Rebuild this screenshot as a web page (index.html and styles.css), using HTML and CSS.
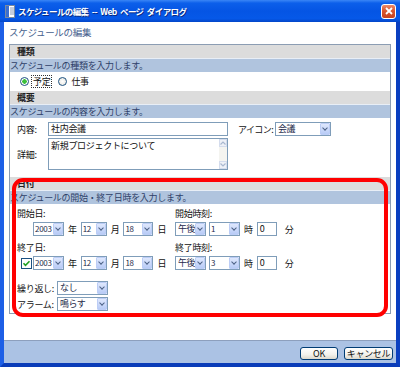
FILE: index.html
```html
<!DOCTYPE html>
<html lang="ja">
<head>
    <meta charset="UTF-8">
    <title>スケジュールの編集</title>
    <link rel="stylesheet" href="styles.css">
</head>
<body>
    <div class="window">
        <div class="titlebar">
            <svg class="appicon" width="10" height="13" viewBox="0 0 10 13">
                <rect x="0.5" y="0.5" width="9" height="12" fill="#fff" stroke="#7a8aa0"/>
                <rect x="1" y="1" width="3" height="11" fill="#3b6fd0"/>
                <path d="M5 3h4M5 5h4M5 7h4M5 9h4" stroke="#8a9ab8" stroke-width="1"/>
            </svg>
            <span class="title">スケジュールの編集 -- Web ページ ダイアログ</span>
            <span class="close">
                <svg width="8" height="8" viewBox="0 0 8 8"><path d="M1 1L7 7M7 1L1 7" stroke="#fff" stroke-width="1.8"/></svg>
            </span>
        </div>
        <div class="frame">
            <div class="client">
                <div class="heading">スケジュールの編集</div>
                <div class="box">
                    <div class="sec-head">種類</div>
                    <div class="sec-desc">スケジュールの種類を入力します。</div>
                    <div class="radios">
                        <span class="radio on"></span><span class="rlabel focus">予定</span>
                        <span class="radio"></span><span class="rlabel">仕事</span>
                    </div>

                    <div class="sec-head">概要</div>
                    <div class="sec-desc">スケジュールの内容を入力します。</div>
                    <div class="summary">
                        <div class="fields">
                            <div class="field">
                                <span class="flabel">内容:</span>
                                <span class="textbox wide">社内会議</span>
                            </div>
                            <div class="field">
                                <span class="flabel">詳細:</span>
                                <div class="textarea">
                                    <span class="tatext">新規プロジェクトについて</span>
                                    <div class="scroll">
                                        <span class="sbtn"><svg width="6" height="4" viewBox="0 0 6 4"><path d="M0.5 3.5L3 1L5.5 3.5" fill="none" stroke="#a9b8d0" stroke-width="1.2"/></svg></span>
                                        <span class="sbtn"><svg width="6" height="4" viewBox="0 0 6 4"><path d="M0.5 0.5L3 3L5.5 0.5" fill="none" stroke="#a9b8d0" stroke-width="1.2"/></svg></span>
                                    </div>
                                </div>
                            </div>
                        </div>
                        <div class="field iconfield">
                            <span class="ilabel">アイコン:</span>
                            <span class="sel w56"><b>会議</b><i class="arr"></i></span>
                        </div>
                    </div>

                    <div class="sec-date">
                        <div class="sec-head">日付</div>
                        <div class="sec-desc">スケジュールの開始・終了日時を入力します。</div>
                        <div class="dates">
                            <div class="drow labels">
                                <span class="dcol">開始日:</span>
                                <span>開始時刻:</span>
                            </div>
                            <div class="drow ctrls">
                                <span class="dcol indent">
                                    <span class="sel w31 num"><b>2003</b><i class="arr"></i></span><span class="unit">年</span>
                                    <span class="sel w26 num"><b>12</b><i class="arr"></i></span><span class="unit">月</span>
                                    <span class="sel w30 num"><b>18</b><i class="arr"></i></span><span class="unit">日</span>
                                </span>
                                <span class="tcol">
                                    <span class="sel w31"><b>午後</b><i class="arr"></i></span>
                                    <span class="sel w31 num gap"><b>1</b><i class="arr"></i></span><span class="unit">時</span>
                                    <span class="textbox w20">0</span><span class="unit min">分</span>
                                </span>
                            </div>
                            <div class="drow labels second">
                                <span class="dcol">終了日:</span>
                                <span>終了時刻:</span>
                            </div>
                            <div class="drow ctrls">
                                <span class="dcol checkrow">
                                    <svg class="check" width="11" height="11" viewBox="0 0 11 11">
                                        <rect x="0.5" y="0.5" width="10" height="10" fill="#fff" stroke="#1c5180"/>
                                        <path d="M2.5 5.2L4.5 7.3L8.5 3.2" fill="none" stroke="#21a121" stroke-width="1.6"/>
                                    </svg>
                                    <span class="sel w31 num"><b>2003</b><i class="arr"></i></span><span class="unit">年</span>
                                    <span class="sel w26 num"><b>12</b><i class="arr"></i></span><span class="unit">月</span>
                                    <span class="sel w30 num"><b>18</b><i class="arr"></i></span><span class="unit">日</span>
                                </span>
                                <span class="tcol">
                                    <span class="sel w31"><b>午後</b><i class="arr"></i></span>
                                    <span class="sel w31 num gap"><b>3</b><i class="arr"></i></span><span class="unit">時</span>
                                    <span class="textbox w20">0</span><span class="unit min">分</span>
                                </span>
                            </div>
                            <div class="drow extra">
                                <span class="xlabel">繰り返し:</span>
                                <span class="sel w51"><b>なし</b><i class="arr"></i></span>
                            </div>
                            <div class="drow extra next">
                                <span class="xlabel">アラーム:</span>
                                <span class="sel w51"><b>鳴らす</b><i class="arr"></i></span>
                            </div>
                        </div>
                    </div>
                </div>
            </div>
            <div class="footer">
                <span class="btn ok">OK</span>
                <span class="btn cancel">キャンセル</span>
            </div>
        </div>
    </div>
</body>
</html>
```

FILE: styles.css
```css
*{
    box-sizing: border-box;
}
body{
    margin: 0;
    font-family: "Noto Sans CJK JP", "Noto Sans", sans-serif;
    font-size: 9px;
    color: #111;
    letter-spacing: -0.3px;
}
.window{
    width: 400px;
    height: 367px;
    display: flex;
    flex-direction: column;
    background: #0a4fd6;
}
.titlebar{
    height: 22px;
    flex: none;
    display: flex;
    align-items: center;
    padding: 0 4px 0 5px;
    background: linear-gradient(#3a86f6 0%, #0c5fea 14%, #0555e4 50%, #0658e8 84%, #0346c8 100%);
}
.titlebar .title{
    margin-left: 3px;
    color: #fff;
    font-weight: bold;
    font-size: 8.5px;
    letter-spacing: -0.6px;
    word-spacing: 2px;
    white-space: pre;
    text-shadow: 1px 1px 0 #0a2a80;
}
.titlebar .close{
    margin-left: auto;
    width: 15px;
    height: 15px;
    border: 1px solid #fff;
    border-radius: 3px;
    background: linear-gradient(#ec8a6a, #d9562f 45%, #c7421f);
    display: flex;
    align-items: center;
    justify-content: center;
}
.frame{
    flex: 1;
    display: flex;
    flex-direction: column;
    background: #fff;
    border-left: 4px solid #1d5fe6;
    border-right: 4px solid #0a3fc0;
    border-bottom: 4px solid #0a3cb8;
}
.client{
    flex: 1;
    padding: 0 5px;
}
.heading{
    height: 22px;
    line-height: 20px;
    color: #46618e;
    font-size: 9.5px;
}
.box{
    border: 1px solid #8c9db3;
}
.sec-head{
    height: 13px;
    line-height: 13px;
    background: #dcdcdc;
    padding-left: 7px;
    font-weight: bold;
    color: #222;
}
.sec-desc{
    height: 14px;
    line-height: 13px;
    background: #b0c4de;
    border-top: 1px solid #e8eef6;
    color: #2e4068;
}
.radios{
    height: 19px;
    display: flex;
    align-items: center;
    padding-left: 10px;
}
.radio{
    width: 9px;
    height: 9px;
    border: 1px solid #1c5180;
    border-radius: 50%;
    background: radial-gradient(#fff, #e4e2da);
}
.radio.on{
    background: radial-gradient(circle, #3cc03c 0 2px, #fff 2.5px);
}
.rlabel{
    margin: 0 6px 0 2px;
    padding: 0 1px;
    line-height: 11px;
    border: 1px solid transparent;
}
.rlabel.focus{
    border: 1px dotted #333;
}
.summary{
    height: 59px;
    display: flex;
    align-items: flex-start;
    padding: 4px 0 0 7px;
}
.fields{
    display: flex;
    flex-direction: column;
    gap: 2px;
}
.field{
    display: flex;
    align-items: center;
}
.flabel{
    width: 31px;
}
.textbox{
    height: 14px;
    line-height: 12px;
    border: 1px solid #7f9db9;
    padding-left: 2px;
    background: #fff;
    flex: none;
}
.textbox.wide{
    width: 180px;
}
.textbox.w20{
    width: 20px;
}
.textarea{
    width: 180px;
    height: 32px;
    border: 1px solid #7f9db9;
    display: flex;
    justify-content: space-between;
}
.tatext{
    padding: 1px 0 0 2px;
    line-height: 12px;
}
.scroll{
    width: 8px;
    display: flex;
    flex-direction: column;
    justify-content: space-between;
    background: #f4f4f0;
}
.sbtn{
    height: 8px;
    border: 1px solid #d4dced;
    background: #eef1f7;
    display: flex;
    align-items: center;
    justify-content: center;
}
.iconfield{
    margin-left: 10px;
}
.ilabel{
    width: 37px;
    white-space: nowrap;
    letter-spacing: -0.6px;
}
.sel{
    height: 14px;
    line-height: 12px;
    border: 1px solid #7f9db9;
    background: #fff;
    padding-left: 2px;
    display: inline-flex;
    flex: none;
    color: #1e2a4a;
    white-space: nowrap;
}
.sel b{
    flex: 1;
    min-width: 0;
    overflow: hidden;
    font-weight: normal;
    letter-spacing: -0.5px;
}
.sel.num{
    padding-left: 1px;
}
.sel.num b{
    font-size: 8px;
    letter-spacing: -0.3px;
}
.sel .arr{
    flex: none;
    width: 10px;
    height: 12px;
    border: 1px solid #bccdf6;
    border-radius: 1px;
    background: linear-gradient(#dfe8fd, #b8cbf6);
    position: relative;
}
.sel .arr::after{
    content: "";
    position: absolute;
    left: 2px;
    top: 2px;
    width: 3px;
    height: 3px;
    border-right: 1.5px solid #4d6185;
    border-bottom: 1.5px solid #4d6185;
    transform: rotate(45deg);
}
.w30{ width: 30px; }
.w26{ width: 26px; }
.w31{ width: 31px; }
.w51{ width: 51px; }
.w56{ width: 56px; }
.sec-date{
    position: relative;
}
.sec-date::after{
    content: "";
    position: absolute;
    left: 2px;
    right: 2px;
    top: 1px;
    bottom: -4px;
    border: 4px solid #f00;
    border-radius: 11px;
    pointer-events: none;
}
.dates{
    height: 109px;
    padding: 3px 0 0 7px;
}
.drow{
    display: flex;
    align-items: center;
}
.drow.labels{
    height: 12px;
}
.drow.labels.second{
    margin-top: 5px;
}
.drow.ctrls{
    height: 14px;
    margin-top: 3px;
}
.dcol{
    width: 158px;
    flex: none;
    display: flex;
    align-items: center;
}
.dcol.indent{
    padding-left: 16px;
}
.dcol.checkrow{
    padding-left: 4px;
}
.check{
    margin-right: 1px;
    flex: none;
}
.tcol{
    display: flex;
    align-items: center;
}
.sel.gap{
    margin-left: 3px;
}
.unit{
    margin: 0 4px;
}
.unit.min{
    margin-left: 8px;
}
.drow.extra{
    height: 14px;
    margin-top: 11px;
}
.drow.extra.next{
    margin-top: 2px;
}
.xlabel{
    width: 40px;
}
.footer{
    height: 23px;
    flex: none;
    border-top: 1px solid #8d9fbd;
    background: #abc2e4;
    display: flex;
    justify-content: flex-end;
    align-items: flex-start;
    gap: 6px;
    padding: 6px 3px 0 0;
}
.btn{
    height: 13px;
    line-height: 11px;
    border: 1px solid #003c74;
    border-radius: 3px;
    background: linear-gradient(#fff, #f2f1ec 60%, #dcd8cc);
    text-align: center;
    color: #111;
}
.btn.ok{
    width: 38px;
}
.btn.cancel{
    width: 49px;
}
```
